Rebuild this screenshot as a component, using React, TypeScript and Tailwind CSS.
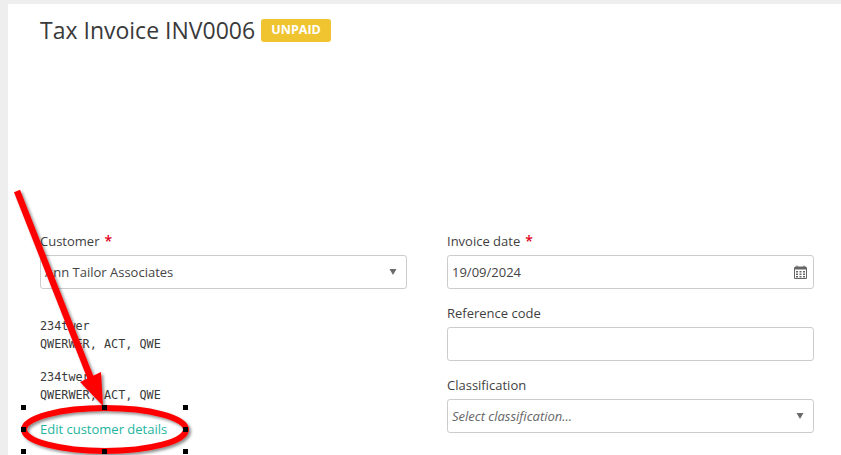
import React from "react";

const font = { fontFamily: '"Open Sans", sans-serif' };

function Label({ text, required }: { text: string; required?: boolean }) {
  return (
    <div className="mb-[4px] flex h-[20px] text-[13px] leading-[20px] text-[#3f3f3f]">
      {text}
      {required && <span className="ml-[5px] text-[14px] font-semibold leading-[20px] text-[#e0001b]">*</span>}
    </div>
  );
}

function Caret() {
  return (
    <svg width="8" height="6" viewBox="0 0 8 6" className="shrink-0 -translate-y-[1px]">
      <path d="M0.5 0H7.500L4 6Z" fill="#6b6b6b" />
    </svg>
  );
}

function CalendarIcon() {
  return (
    <svg width="13" height="14" viewBox="0 0 13 14" className="-mr-[3px] shrink-0 -translate-y-[1px]">
      <path d="M0.5 2.5H12.5V13.5H0.5Z" fill="none" stroke="#666" />
      <path d="M1 1.5H12V4.5H1Z" fill="#666" />
      <path d="M3 0.5V2M10 0.5V2" stroke="#666" />
      <path d="M2 6h2v1.500H2zM5.500 6h2v1.500h-2zM9 6h2v1.500H9zM2 8.500h2V10H2zM5.500 8.500h2V10h-2zM9 8.500h2V10H9zM2 11h2v1.500H2zM5.500 11h2v1.500h-2zM9 11h2v1.500H9z" fill="#666" />
    </svg>
  );
}

function Box({ children }: { children?: React.ReactNode }) {
  return (
    <div className="flex h-[34px] items-center justify-between rounded-[3px] border border-[#ccc] bg-white pl-[4px] pr-[9px] pt-[1px] text-[13px] text-[#444]">
      {children}
    </div>
  );
}

function Annotation() {
  const xs = [23, 104, 185];
  const ys = [407, 429, 451];
  return (
    <>
      <svg width="841" height="455" viewBox="0 0 841 455" className="absolute left-0 top-0">
        <defs>
          <filter id="sh" x="-20%" y="-20%" width="140%" height="140%">
            <feDropShadow dx="2" dy="2" stdDeviation="1.5" floodColor="#000" floodOpacity="0.45" />
          </filter>
        </defs>
        <g filter="url(#sh)">
          <path d="M17 191L93 384" stroke="#ff0000" strokeWidth="6.5" fill="none" />
          <path d="M103 406L80 382L101 372Z" fill="#ff0000" />
          <ellipse cx="105" cy="429.500" rx="81" ry="21.500" fill="none" stroke="#ff0000" strokeWidth="6" />
        </g>
      </svg>
      {ys.map((y) =>
        xs.map((x) =>
          y === 429 && x === 104 ? null : (
            <div key={`${x}-${y}`} className="absolute h-[5px] w-[5px] bg-black" style={{ left: x - 2, top: y - 2 }} />
          )
        )
      )}
    </>
  );
}

export default function App() {
  return (
    <div className="relative h-[455px] w-[841px] overflow-hidden bg-[#eeeeee] pl-[8px] pt-[4px]" style={font}>
      <div className="h-full bg-white pl-[32px] pr-[27px] pt-[9px]">
        <div className="flex h-[35px] items-center">
          <h1 className="text-[23px] font-normal leading-[35px] text-[#3a3a3a]">Tax Invoice INV0006</h1>
          <span className="ml-[6px] flex h-[23px] w-[70px] items-center justify-center rounded-[3px] bg-[#f0c330] text-[12.500px] font-bold text-white">
            UNPAID
          </span>
        </div>
        <div className="mt-[183px] grid grid-cols-2 gap-x-[40px]">
          <div>
            <Label text="Customer" required />
            <Box>
              <span>Ann Tailor Associates</span>
              <Caret />
            </Box>
            <div className="mt-[28px] text-[11.800px] leading-[18px] text-[#3a3a3a]" style={{ fontFamily: '"DejaVu Sans Mono", monospace' }}>
              <div>234twer</div>
              <div>QWERWER, ACT, QWE</div>
              <div className="mt-[15px]">234twer</div>
              <div>QWERWER, ACT, QWE</div>
            </div>
            <div className="mt-[16px] text-[13px] leading-[18px] text-[#1db5a0]">Edit customer details</div>
          </div>
          <div>
            <Label text="Invoice date" required />
            <Box>
              <span>19/09/2024</span>
              <CalendarIcon />
            </Box>
            <div className="mt-[14px]">
              <Label text="Reference code" />
              <Box />
            </div>
            <div className="mt-[14px]">
              <Label text="Classification" />
              <Box>
                <span className="italic text-[#666]">Select classification...</span>
                <Caret />
              </Box>
            </div>
          </div>
        </div>
      </div>
      <Annotation />
    </div>
  );
}
